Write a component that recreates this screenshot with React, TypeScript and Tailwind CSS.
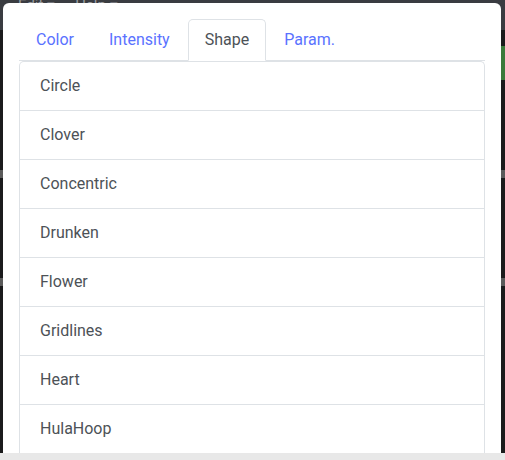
const shapes = ["Circle", "Clover", "Concentric", "Drunken", "Flower", "Gridlines", "Heart", "HulaHoop"];

const tabs = ["Color", "Intensity", "Shape", "Param."];

export default function App() {
  return (
    <div className="relative h-[460px] w-[505px] overflow-hidden bg-[#1b1b1c] font-['Roboto',sans-serif]">
      {/* app behind the modal */}
      <div className="flex h-[30px] gap-5 bg-[#3a3c41] px-[18px] text-[15px] leading-[10px] text-[#9a9ca0]">
        <span>Edit ▾</span>
        <span>Help ▾</span>
      </div>
      <div className="flex h-[400px] justify-between">
        <div className="flex w-[6px] flex-col pt-[140px]">
          <div className="h-2 bg-[#5a5a5a]" />
          <div className="mt-[100px] h-2 bg-[#5a5a5a]" />
        </div>
        <div className="flex w-[6px] flex-col pt-4">
          <div className="h-[34px] bg-[#3b7a3a]" />
          <div className="mt-[90px] h-2 bg-[#5a5a5a]" />
          <div className="mt-[100px] h-2 bg-[#5a5a5a]" />
        </div>
      </div>

      {/* modal */}
      <div className="absolute left-[3px] top-[3px] w-[498px] rounded-[6px] bg-white p-4">
        <div className="flex gap-px border-b border-[#dee2e6]">
          {tabs.map((t) => (
            <div
              key={t}
              className={
                t === "Shape"
                  ? "-mb-px rounded-t-[5px] border border-[#dee2e6] border-b-white bg-white px-4 py-2 text-base leading-6 text-[#4d5257]"
                  : "-mb-px border border-transparent px-4 py-2 text-base leading-6 text-[#5a72ff]"
              }
            >
              {t}
            </div>
          ))}
        </div>
        <div className="rounded-t-[5px] border border-b-0 border-[#dee2e6]">
          {shapes.map((s, i) => (
            <div
              key={s}
              className={
                (i > 0 ? "border-t border-[#dee2e6] " : "") +
                "px-5 py-3 text-base leading-6 text-[#4d5257]"
              }
            >
              {s}
            </div>
          ))}
        </div>
      </div>

      <div className="absolute bottom-0 left-0 h-[7px] w-full bg-[#e8e8e8]" />
    </div>
  );
}
